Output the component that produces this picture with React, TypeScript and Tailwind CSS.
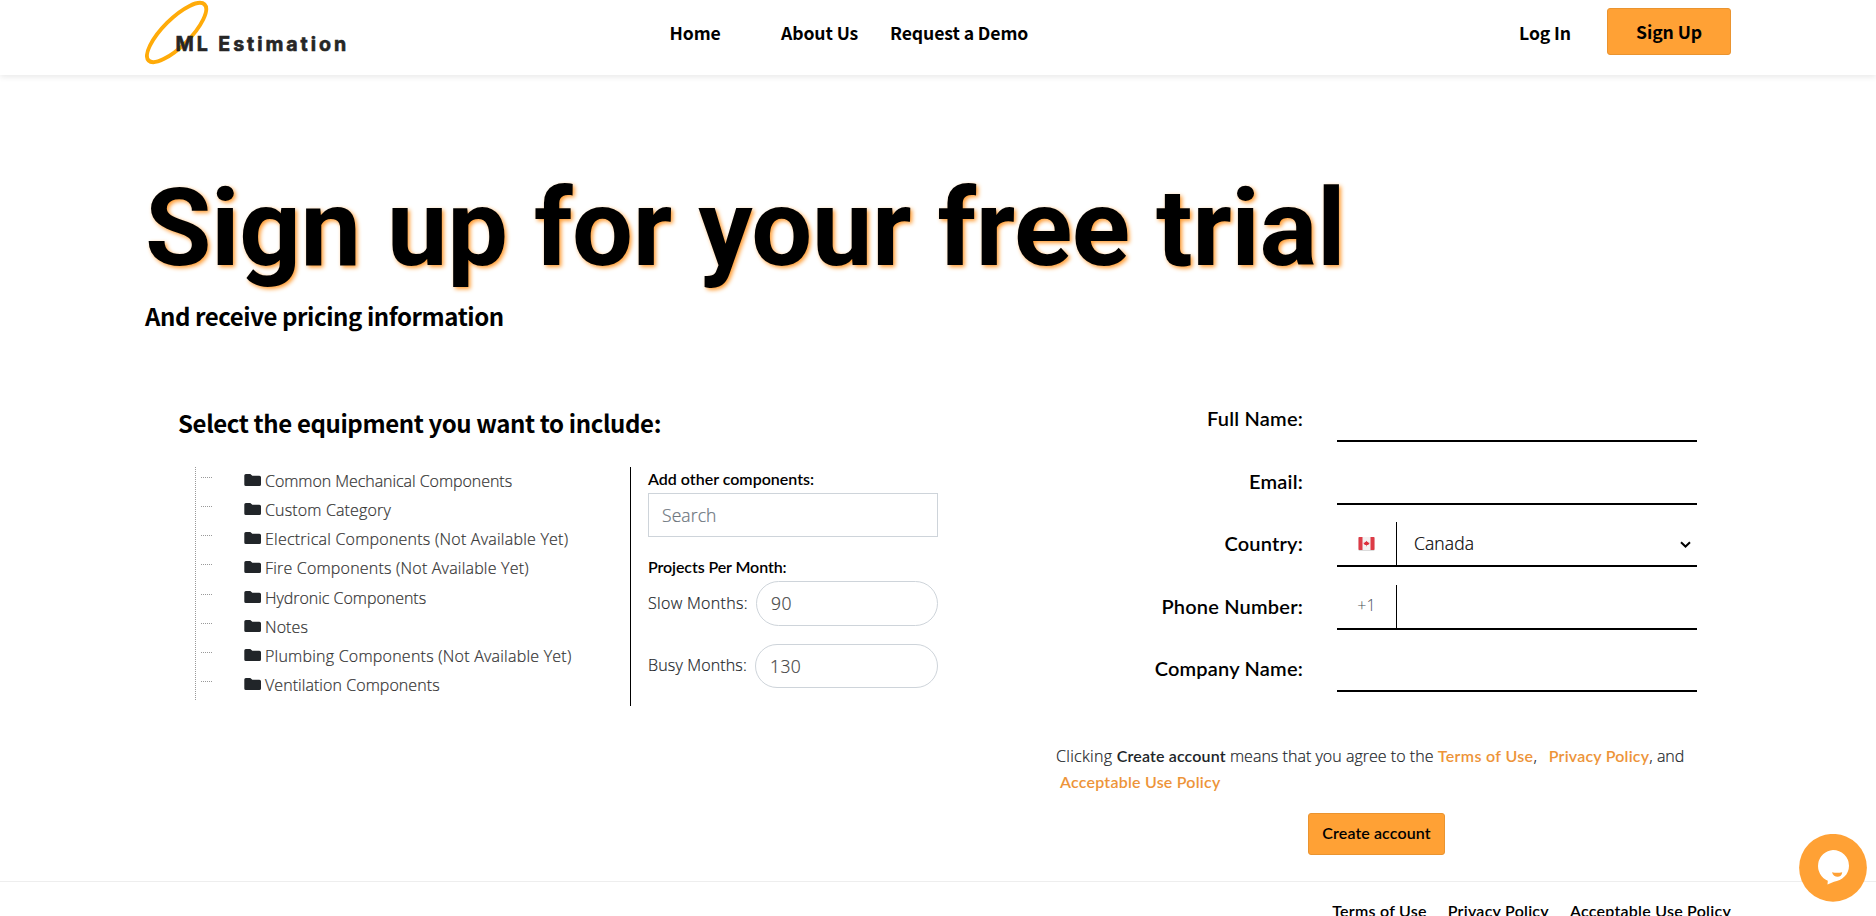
import type { ReactNode } from 'react';

const treeItems = [
  { label: 'Common Mechanical Components', tracking: 'tracking-[-0.05px]' },
  { label: 'Custom Category', tracking: 'tracking-[0.15px]' },
  { label: 'Electrical Components (Not Available Yet)', tracking: 'tracking-[0.23px]' },
  { label: 'Fire Components (Not Available Yet)', tracking: 'tracking-[0.2px]' },
  { label: 'Hydronic Components', tracking: 'tracking-[-0.03px]' },
  { label: 'Notes', tracking: 'tracking-[0.1px]' },
  { label: 'Plumbing Components (Not Available Yet)', tracking: 'tracking-[0.23px]' },
  { label: 'Ventilation Components', tracking: 'tracking-[0.06px]' },
];

function Logo() {
  return (
    <svg className="h-[68px] w-[206px]" viewBox="0 0 206 68">
      <ellipse cx="31.6" cy="32.5" rx="39.6" ry="13.6" transform="rotate(-45 31.6 32.5)" fill="none" stroke="#ffab09" strokeWidth="3.9" />
      <text x="30.5" y="50.6" textLength="170.5" stroke="#262626" strokeWidth="0.6" className="fill-[#262626] font-['Inter',sans-serif] text-[19.6px] font-bold">
        ML Estimation
      </text>
    </svg>
  );
}

function Header() {
  return (
    <header className="h-[75px] shrink-0 bg-white shadow-[0_2px_6px_rgba(0,0,0,0.09)]">
      <div className="mx-auto flex w-[1586px] items-start font-['Noto_Sans_CJK_SC',sans-serif] text-[17.6px] leading-6 font-bold tracking-[-0.1px]">
        <Logo />
        <nav className="ml-[318.5px] flex pt-[21px]">
          <a className="w-[111.5px]">Home</a>
          <a className="w-[109px]">About Us</a>
          <a>Request a Demo</a>
        </nav>
        <a className="mt-[21px] ml-auto">Log In</a>
        <a className="mt-2 ml-9 flex h-[47px] w-[124px] justify-center rounded-[3px] border border-[#ea9430] bg-[#ffa135] pt-[11px]">Sign Up</a>
      </div>
    </header>
  );
}

function FolderIcon() {
  return (
    <svg className="mt-[6px] h-3 w-[17px]" viewBox="0 0 17 12">
      <path d="M1.900 0H6.300l2 1.700h7.100A1.600 1.600 0 0 1 17 3.300v7.100a1.600 1.600 0 0 1-1.600 1.600H1.900A1.600 1.600 0 0 1 .3 10.400V1.600A1.600 1.600 0 0 1 1.900 0z" fill="#212529" />
    </svg>
  );
}

function EquipmentTree() {
  return (
    <ul className="ml-[17px] h-[233px] w-[435px] border-l border-dotted border-[#999]">
      {treeItems.map((item) => (
        <li key={item.label} className="flex h-[29.14px] pt-px">
          <span className="mt-[9px] ml-[5px] h-px w-[11px] border-t border-dotted border-[#999]" />
          <span className="ml-8"><FolderIcon /></span>
          <span className={`mt-px ml-[4px] leading-6 font-light text-[#333] [-webkit-text-stroke:0.2px] ${item.tracking}`}>{item.label}</span>
        </li>
      ))}
    </ul>
  );
}

function EquipmentOptions() {
  return (
    <div className="h-[239px] w-[308px] border-l border-black pl-[17px] [-webkit-text-stroke:0.2px]">
      <div className="h-[26px] font-['Lato',sans-serif] leading-6 font-semibold text-black [-webkit-text-stroke:0px]">Add other components:</div>
      <div className="flex h-11 items-center border border-[#ced4da] pl-[13px] text-[17.5px] font-light tracking-[0.1px] text-[#6c757d]">Search</div>
      <div className="mt-[18px] h-[26px] font-['Lato',sans-serif] leading-6 font-semibold tracking-[-0.1px] text-black [-webkit-text-stroke:0px]">Projects Per Month:</div>
      <div className="flex h-[45px] items-center">
        <span className="mr-2 -mt-px w-[100px] font-light tracking-[0.3px] whitespace-nowrap text-[#212529]">Slow Months:</span>
        <div className="flex h-[45px] flex-1 items-center rounded-full border border-[#ced4da] pl-[14px] text-[17.5px] font-light tracking-[0.4px] text-[#444]">90</div>
      </div>
      <div className="mt-[18px] flex h-11 items-center">
        <span className="mr-2 -mt-[2px] w-[99px] font-light tracking-[0.15px] whitespace-nowrap text-[#212529]">Busy Months:</span>
        <div className="flex h-11 flex-1 items-center rounded-full border border-[#ced4da] pl-[14px] text-[17.5px] font-light tracking-[0.4px] text-[#444]">130</div>
      </div>
    </div>
  );
}

function CanadaFlag() {
  return (
    <svg className="h-[14px] w-[17px]" viewBox="0 0 17 14">
      <rect x="0.500" y="0.300" width="16" height="13.400" rx="0.800" fill="#d0d0d0" />
      <rect x="0.500" y="0" width="16" height="13" rx="0.800" fill="#f3f1f1" />
      <path d="M.5.8A.8.8 0 0 1 1.300 0H4.500v13H1.300a.8.8 0 0 1-.8-.8zM12.500 0h3.200a.8.8 0 0 1 .8.8v11.400a.8.8 0 0 1-.8.8h-3.200z" fill="#dd3b46" />
      <path d="M8.500 3.800l.8 1.100.9-.2-.2 1.100 1.300-.3-.2.9.5.4-1.800 1.200H8.800v1.300h-.6V8H7.200L5.400 6.800l.5-.4-.2-.9 1.300.3-.2-1.100.9.200z" fill="#dd2e3b" />
    </svg>
  );
}

function Field({ label, prefix, children }: { label: string; prefix?: ReactNode; children?: ReactNode }) {
  return (
    <div className="flex h-[62.5px]">
      <div className="w-[247px] pt-[6px] text-right font-['Lato',sans-serif] text-[20px] leading-[30px] font-semibold tracking-[0.2px] text-black">{label}</div>
      <div className="ml-[34px] flex h-[45px] w-[360px] border-b-2 border-black">
        {prefix && <div className="flex w-[60px] items-center justify-center border-r border-black">{prefix}</div>}
        {children}
      </div>
    </div>
  );
}

const policyLink = "font-['Lato',sans-serif] font-semibold text-[#ed9439] [-webkit-text-stroke:0px]";

function SignupForm() {
  return (
    <section className="ml-[118px] w-[641px] pt-px">
      <Field label="Full Name:" />
      <Field label="Email:" />
      <Field label="Country:" prefix={<CanadaFlag />}>
        <div className="flex flex-1 items-center justify-between pr-[6px] pl-[17px] text-[17.5px] font-light tracking-[0.1px] text-black [-webkit-text-stroke:0.2px]">
          <span>Canada</span>
          <svg className="mt-[2px] h-[7px] w-[11px]" viewBox="0 0 11 7">
            <path d="M1 1.200l4.500 4.300L10 1.200" fill="none" stroke="#000" strokeWidth="2" />
          </svg>
        </div>
      </Field>
      <Field label="Phone Number:" prefix={<span className="-mt-[2px] font-light text-[#495057]">+1</span>} />
      <Field label="Company Name:" />
      <p className="mt-[33px] h-[62px] leading-[26px] font-light whitespace-nowrap text-[#212529] [-webkit-text-stroke:0.2px]">
        <span className="tracking-[0.3px]">Clicking </span>
        <b className="font-['Lato',sans-serif] font-semibold tracking-[0.15px] [-webkit-text-stroke:0px]">Create account</b>
        <span className="tracking-[0.03px]"> means that you agree to the </span>
        <a className={`${policyLink} tracking-[0.35px]`}>Terms of Use</a>
        <span className="tracking-[1.2px]">, &nbsp;</span>
        <a className={`${policyLink} tracking-[0.2px]`}>Privacy Policy</a>, and
        <br />
        <a className={`${policyLink} pl-1 tracking-[0.22px]`}>Acceptable Use Policy</a>
      </p>
      <button className="mt-2 ml-[252px] flex h-[42px] w-[137px] justify-center rounded-[3px] border border-[#ea9430] bg-[#ffa135] pt-[7px] font-['Lato',sans-serif] leading-6 font-semibold tracking-[0.1px] text-black">
        Create account
      </button>
    </section>
  );
}

function ChatButton() {
  return (
    <button className="fixed top-[834px] left-[1799px] size-[68px]">
      <svg className="size-full" viewBox="0 0 68 68">
        <circle cx="34" cy="33.800" r="33.900" fill="#ffa135" />
        <path d="M34 16a16 16 0 0 1 16 15.700c0 9-7 14.600-15 16L28.500 50.500l.3-3.800A16 16 0 0 1 34 16z" fill="#fff" />
        <path d="M33 38.200q5 1.200 10.200 0c-.3 6-8.700 6-10.200 0z" fill="#ffa135" />
      </svg>
    </button>
  );
}

export default function App() {
  return (
    <div className="flex h-[916px] flex-col overflow-hidden bg-white font-['Open_Sans',sans-serif] text-[16px] text-black">
      <Header />
      <main className="mx-auto h-[806px] w-[1586px] shrink-0 pt-[88px]">
        <h1 className="h-[135px] font-['Roboto',sans-serif] text-[108px] leading-[130px] font-bold tracking-[-0.42px] whitespace-nowrap text-shadow-[2px_2px_4px_#ff9a2e]">
          Sign up for your free trial
        </h1>
        <h2 className="font-['Noto_Sans_CJK_SC',sans-serif] text-[24px] leading-9 font-bold tracking-[-0.42px]">And receive pricing information</h2>
        <div className="mt-[62px] flex pl-[33px]">
          <section className="w-[760px] pt-[9px]">
            <h2 className="font-['Noto_Sans_CJK_SC',sans-serif] text-[24px] leading-9 font-bold tracking-[-0.39px]">Select the equipment you want to include:</h2>
            <div className="mt-[26px] flex">
              <EquipmentTree />
              <EquipmentOptions />
            </div>
          </section>
          <SignupForm />
        </div>
      </main>
      <footer className="h-[60px] shrink-0 border-t border-[#eee]">
        <div className="mx-auto flex w-[1586px] justify-end gap-[21px] pt-[17px] font-['Lato',sans-serif] leading-6 font-semibold tracking-[0.25px]">
          <a>Terms of Use</a>
          <a>Privacy Policy</a>
          <a>Acceptable Use Policy</a>
        </div>
      </footer>
      <ChatButton />
    </div>
  );
}
